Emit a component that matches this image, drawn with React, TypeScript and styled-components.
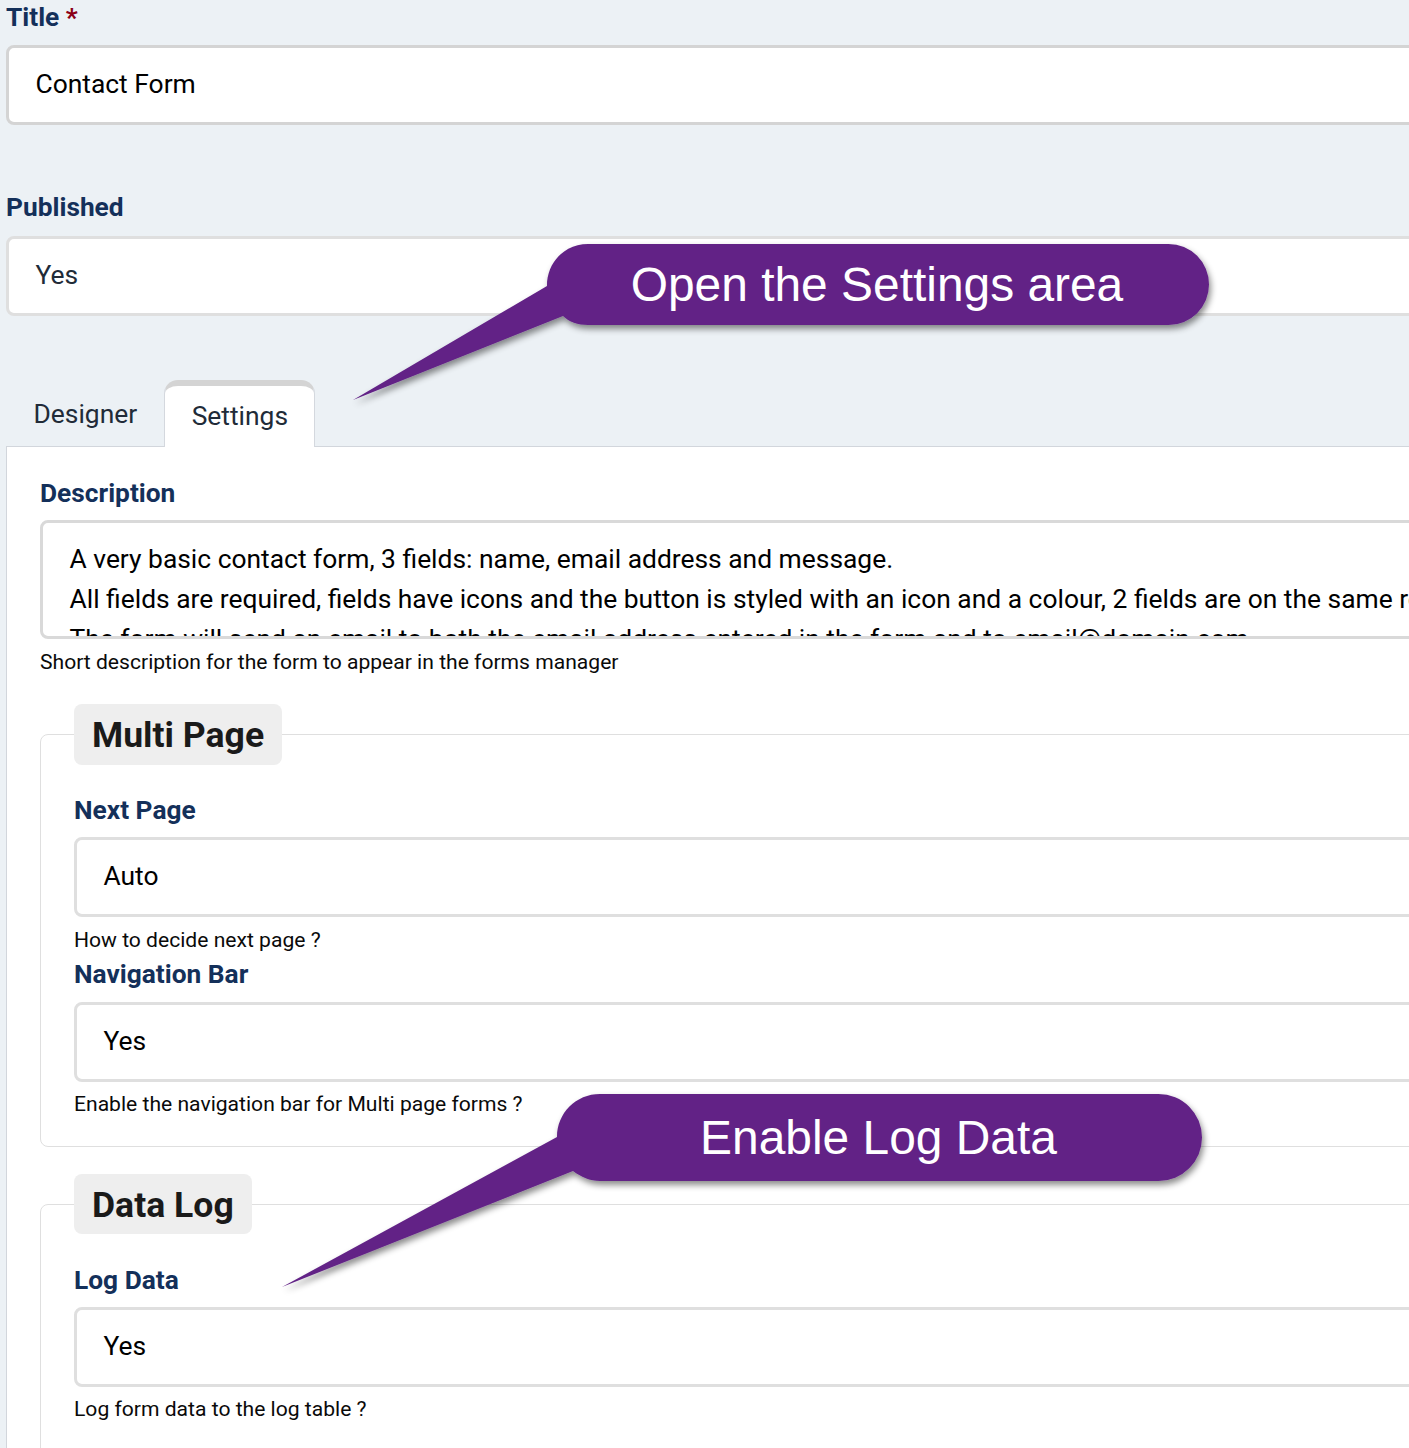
import React from "react";
import styled, { createGlobalStyle } from "styled-components";

const Global = createGlobalStyle`
  html, body { margin: 0; padding: 0; background: #ecf1f5; overflow: hidden; }
  * { box-sizing: border-box; }
`;

const Viewport = styled.div`
  position: relative;
  width: 1409px;
  height: 1448px;
  overflow: hidden;
  font-family: Roboto, "Liberation Sans", sans-serif;
  color: #000;
`;

const Page = styled.div`
  width: 1700px;
  padding: 1px 0 0 6px;
`;

const Label = styled.label<{ $top?: number; $bottom?: number }>`
  display: block;
  font-size: 26.3px;
  line-height: 32px;
  font-weight: 700;
  color: #14305a;
  margin-top: ${(p) => p.$top ?? 0}px;
  margin-bottom: ${(p) => p.$bottom ?? 11}px;
`;

const Star = styled.span`
  color: #8b0015;
`;

const Field = styled.div<{ $border?: string; $color?: string }>`
  height: 80px;
  display: flex;
  align-items: center;
  padding: 0 26.5px 2px;
  background: #fff;
  border: 3px solid ${(p) => p.$border ?? "#dfdfdf"};
  border-radius: 8px;
  font-size: 26.4px;
  color: ${(p) => p.$color ?? "#000"};
`;

const Tabs = styled.div`
  display: flex;
  align-items: flex-end;
  height: 67px;
  margin-top: 64px;
  position: relative;
  z-index: 1;
  margin-bottom: -1px;
`;

const Tab = styled.div<{ $active?: boolean }>`
  height: ${(p) => (p.$active ? 67 : 66)}px;
  padding: ${(p) => (p.$active ? "0 26px 1px 27px" : "0 26.5px 1px 27.5px")};
  display: flex;
  align-items: center;
  font-size: 26.4px;
  color: #212b38;
  ${(p) =>
    p.$active
      ? `background:#fff;border:1px solid #d4d8de;border-top:6px solid #d4d4d4;border-bottom:0;border-radius:14px 14px 0 0;`
      : ""}
`;

const Panel = styled.div`
  background: #fff;
  border: 1px solid #d2d6dc;
  padding: 30px 33px 0;
  height: 1100px;
`;

const TextArea = styled.div`
  height: 119px;
  overflow: hidden;
  background: #fff;
  border: 3px solid #d9d9d9;
  border-radius: 8px;
  padding: 16px 26.5px 0;
  font-size: 26.4px;
  line-height: 40px;
  white-space: nowrap;
`;

const Help = styled.div<{ $top?: number }>`
  font-size: 21.1px;
  line-height: 27px;
  margin: ${(p) => p.$top ?? 9}px 0 0;
  color: #0a0a0a;
`;

const Fieldset = styled.fieldset<{ $top: number; $height: number }>`
  margin: ${(p) => p.$top}px 0 0;
  padding: 0 33px;
  border: 1px solid #dfdfdf;
  border-radius: 8px;
  min-width: 0;
  height: ${(p) => p.$height}px;
`;

const Legend = styled.legend<{ $height: number }>`
  margin-left: 0;
  padding: 1px 18px 0;
  height: ${(p) => p.$height}px;
  line-height: ${(p) => p.$height}px;
  background: #eee;
  border-radius: 8px;
  font-size: 35.6px;
  font-weight: 700;
  color: #1a1a1a;
`;

const CalloutShape = styled.svg`
  position: absolute;
  left: 0;
  top: 0;
  pointer-events: none;
`;

const CalloutText = styled.div<{ $left: number; $top: number; $width: number; $height: number }>`
  position: absolute;
  left: ${(p) => p.$left}px;
  top: ${(p) => p.$top}px;
  width: ${(p) => p.$width}px;
  height: ${(p) => p.$height}px;
  display: flex;
  align-items: center;
  justify-content: center;
  color: #fff;
  font-family: "Liberation Sans", Arial, sans-serif;
  font-size: 47.9px;
  white-space: nowrap;
`;

const PURPLE = "#622486";

export default function App() {
  return (
    <Viewport>
      <Global />
      <Page>
        <Label $bottom={12}>
          Title <Star>*</Star>
        </Label>
        <Field $border="#d4d4d4">Contact Form</Field>

        <Label $top={66} $bottom={13}>Published</Label>
        <Field $color="#212b38">Yes</Field>

        <Tabs>
          <Tab>Designer</Tab>
          <Tab $active>Settings</Tab>
        </Tabs>

        <Panel>
          <Label $bottom={11}>Description</Label>
          <TextArea>
            A very basic contact form, 3 fields: name, email address and message.
            <br />
            All fields are required, fields have icons and the button is styled with an icon and a colour, 2 fields are on the same row.
            <br />
            The form will send an email to both the email address entered in the form and to email@domain.com
          </TextArea>
          <Help>Short description for the form to appear in the forms manager</Help>

          <Fieldset $top={29} $height={443}>
            <Legend $height={61}>Multi Page</Legend>
            <Label $top={29} $bottom={11}>Next Page</Label>
            <Field>Auto</Field>
            <Help>How to decide next page ?</Help>
            <Label $top={5} $bottom={12}>Navigation Bar</Label>
            <Field>Yes</Field>
            <Help $top={8}>Enable the navigation bar for Multi page forms ?</Help>
          </Fieldset>

          <Fieldset $top={27} $height={320}>
            <Legend $height={60}>Data Log</Legend>
            <Label $top={30} $bottom={11}>Log Data</Label>
            <Field>Yes</Field>
            <Help $top={8}>Log form data to the log table ?</Help>
          </Fieldset>
        </Panel>
      </Page>

      <CalloutShape width="1409" height="1448" viewBox="0 0 1409 1448">
        <defs>
          <filter id="callout-shadow" x="-10%" y="-20%" width="120%" height="150%">
            <feDropShadow dx="2" dy="4" stdDeviation="3" floodColor="#000" floodOpacity="0.45" />
          </filter>
        </defs>
        <path
          filter="url(#callout-shadow)"
          fill={PURPLE}
          d="M588 244H1168.5A40.5 40.5 0 0 1 1168.5 325H588C578 325 569 322 563 316L353 400L547 286C547 262 565 244 588 244Z"
        />
        <path
          filter="url(#callout-shadow)"
          fill={PURPLE}
          d="M600 1094H1158.5A43.5 43.5 0 0 1 1158.5 1181H600C590 1181 581 1177 573 1171L282 1287L557 1137C557 1113 576 1094 600 1094Z"
        />
      </CalloutShape>
      <CalloutText $left={546} $top={244} $width={662} $height={81}>Open the Settings area</CalloutText>
      <CalloutText $left={556} $top={1094} $width={645} $height={87}>Enable Log Data</CalloutText>
    </Viewport>
  );
}
